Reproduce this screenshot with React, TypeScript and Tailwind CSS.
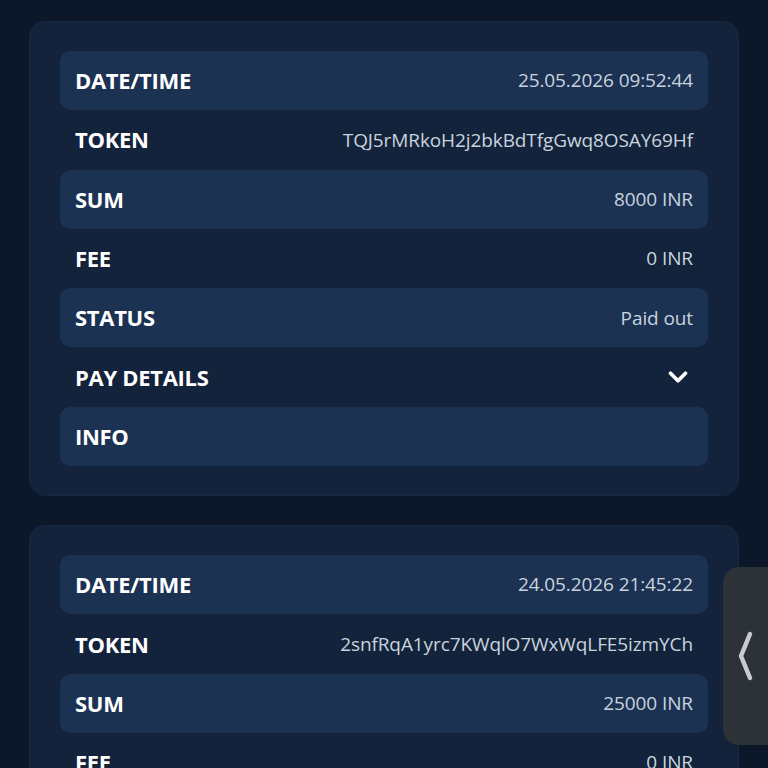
import { ChevronDown } from "lucide-react";

type Tx = {
  date: string;
  token: string;
  sum: string;
  fee: string;
  status: string;
};

const txs: Tx[] = [
  {
    date: "25.05.2026 09:52:44",
    token: "TQJ5rMRkoH2j2bkBdTfgGwq8OSAY69Hf",
    sum: "8000 INR",
    fee: "0 INR",
    status: "Paid out",
  },
  {
    date: "24.05.2026 21:45:22",
    token: "2snfRqA1yrc7KWqlO7WxWqLFE5izmYCh",
    sum: "25000 INR",
    fee: "0 INR",
    status: "Paid out",
  },
];

function Row({ label, value, shaded, children }: { label: string; value?: string; shaded?: boolean; children?: React.ReactNode }) {
  return (
    <div
      className={
        "h-[59.3px] flex items-center justify-between px-[15px] rounded-[10px] " +
        (shaded ? "bg-[#1b3253]" : "")
      }
    >
      <span className="text-[22px] font-bold text-white tracking-[-0.3px]">{label}</span>
      {value && <span className="text-[19px] text-[#c9d3de] tracking-[-0.1px]">{value}</span>}
      {children}
    </div>
  );
}

export default function App() {
  return (
    <div
      className="h-[768px] overflow-hidden bg-[#0c1729] relative"
      style={{ fontFamily: "'Open Sans', 'Noto Sans', sans-serif" }}
    >
      <div className="flex flex-col gap-[31px] pt-[22px] px-[30px]">
        {txs.map((t) => (
          <div key={t.date} className="bg-[#13233b] rounded-[16px] py-[29px] px-[30px] shadow-[0_0_0_1px_#162842]">
            <Row label="DATE/TIME" value={t.date} shaded />
            <Row label="TOKEN" value={t.token} />
            <Row label="SUM" value={t.sum} shaded />
            <Row label="FEE" value={t.fee} />
            <Row label="STATUS" value={t.status} shaded />
            <Row label="PAY DETAILS">
              <ChevronDown className="w-[30px] h-[30px] text-white" strokeWidth={3} />
            </Row>
            <Row label="INFO" shaded />
          </div>
        ))}
      </div>

      {/* side tab */}
      <div className="absolute right-0 top-[567px] w-[45px] h-[178px] bg-[#2d3237] rounded-l-[16px] flex items-center justify-center">
        <svg width="18" height="52" viewBox="0 0 18 52" className="ml-[-2px]">
          <path d="M14 4 L5 26 L14 48" fill="none" stroke="#c7cbd0" strokeWidth="4.5" strokeLinecap="round" strokeLinejoin="round" />
        </svg>
      </div>
    </div>
  );
}
